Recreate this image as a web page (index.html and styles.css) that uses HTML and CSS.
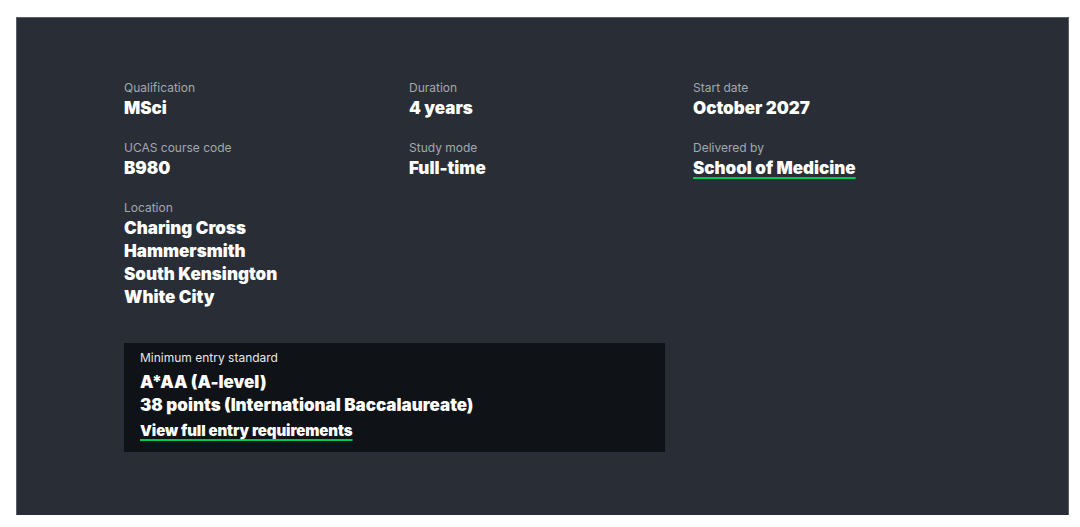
FILE: index.html
```html
<!DOCTYPE html>
<html lang="en">
<head>
<meta charset="utf-8">
<title>Course facts</title>
<link rel="stylesheet" href="styles.css">
</head>
<body>
<section class="facts">
  <div class="grid">
    <div class="item">
      <div class="label">Qualification</div>
      <div class="value">MSci</div>
    </div>
    <div class="item">
      <div class="label">Duration</div>
      <div class="value">4 years</div>
    </div>
    <div class="item">
      <div class="label">Start date</div>
      <div class="value">October 2027</div>
    </div>
    <div class="item">
      <div class="label">UCAS course code</div>
      <div class="value">B980</div>
    </div>
    <div class="item">
      <div class="label">Study mode</div>
      <div class="value">Full-time</div>
    </div>
    <div class="item">
      <div class="label">Delivered by</div>
      <div class="value"><a class="link" href="#">School of Medicine</a></div>
    </div>
    <div class="item">
      <div class="label">Location</div>
      <div class="value">Charing Cross</div>
      <div class="value">Hammersmith</div>
      <div class="value">South Kensington</div>
      <div class="value">White City</div>
    </div>
  </div>
  <div class="entry">
    <div class="entry-label">Minimum entry standard</div>
    <div class="entry-values">
      <div class="value">A*AA (A-level)</div>
      <div class="value">38 points (International Baccalaureate)</div>
    </div>
    <a class="link entry-link" href="#">View full entry requirements</a>
  </div>
</section>
</body>
</html>
```
FILE: styles.css
```css
html, body {
  margin: 0;
  padding: 0;
  background: #ffffff;
}
body {
  font-family: Inter, "Noto Sans", "Liberation Sans", sans-serif;
  color: #ffffff;
}
.facts {
  box-sizing: border-box;
  margin: 17px 11px 0 16px;
  height: 498px;
  background: #292e36;
  border-top: 1px solid #5b6067;
  border-left: 1px solid #5b6067;
  border-right: 1px solid #5b6067;
  padding: 61px 0 0 107px;
}
.grid {
  display: grid;
  grid-template-columns: 285px 284px 285px;
  row-gap: 19px;
}
.label {
  font-size: 12px;
  line-height: 18px;
  color: #a3a8ae;
}
.value {
  font-size: 17px;
  line-height: 23px;
  font-weight: 900;
  color: #ffffff;
}
.link {
  color: #ffffff;
  text-decoration: underline;
  text-decoration-color: #00c853;
  text-decoration-thickness: 2px;
  text-underline-offset: 3px;
}
.entry {
  width: 541px;
  box-sizing: border-box;
  margin-top: 34px;
  background: #0f1216;
  padding: 6px 16px 10px;
}
.entry-label {
  font-size: 12px;
  line-height: 18px;
  color: #e6e8ea;
}
.entry-values {
  margin-top: 4px;
}
.entry-link {
  display: inline-block;
  margin-top: 3px;
  font-size: 15px;
  line-height: 22px;
  font-weight: 900;
  letter-spacing: -0.1px;
}
```
